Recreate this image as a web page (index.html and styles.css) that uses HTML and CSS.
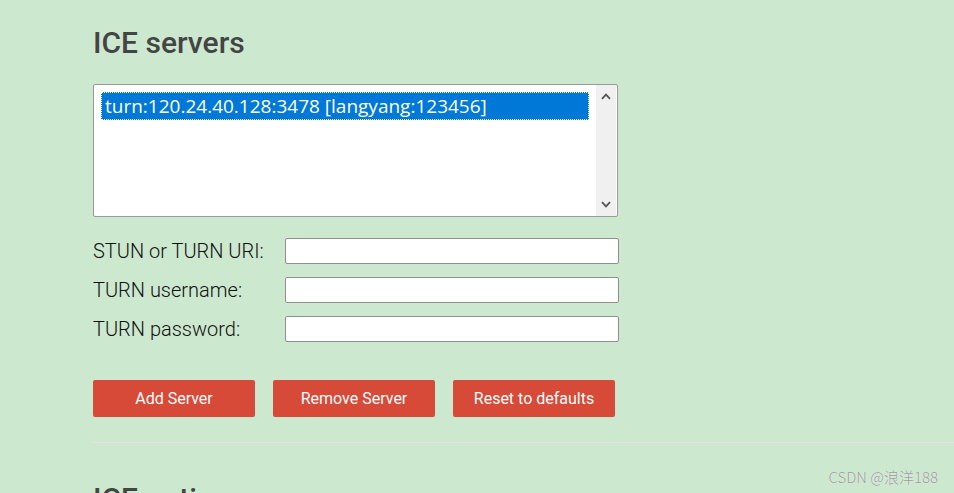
FILE: index.html
```html
<!DOCTYPE html>
<html lang="en">
<head>
    <meta charset="UTF-8">
    <meta name="viewport" content="width=device-width, initial-scale=1.0">
    <title>Trickle ICE</title>
    <link rel="stylesheet" href="styles.css">
</head>
<body>
    <div class="container">
        <section class="servers">
            <h2>ICE servers</h2>

            <div class="server-list">
                <div class="server-items">
                    <div class="server-item selected">turn:120.24.40.128:3478 [langyang:123456]</div>
                </div>
                <div class="list-scrollbar">
                    <svg width="10" height="7" viewBox="0 0 10 7"><path d="M1 5.8 L5 1.6 L9 5.8" fill="none" stroke="#555" stroke-width="1.8"/></svg>
                    <svg width="10" height="7" viewBox="0 0 10 7"><path d="M1 1.2 L5 5.4 L9 1.2" fill="none" stroke="#555" stroke-width="1.8"/></svg>
                </div>
            </div>

            <div class="server-form">
                <div class="form-row">
                    <label for="url">STUN or TURN URI:</label>
                    <input type="text" id="url">
                </div>
                <div class="form-row">
                    <label for="username">TURN username:</label>
                    <input type="text" id="username">
                </div>
                <div class="form-row">
                    <label for="password">TURN password:</label>
                    <input type="text" id="password">
                </div>
            </div>

            <div class="actions">
                <button>Add Server</button>
                <button>Remove Server</button>
                <button>Reset to defaults</button>
            </div>
        </section>

        <hr>

        <section class="options">
            <h2>ICE options</h2>
        </section>
    </div>

    <div class="watermark">CSDN @浪洋188</div>
</body>
</html>
```

FILE: styles.css
```css
* {
    box-sizing: border-box;
}

html, body {
    overflow: hidden;
}

body {
    margin: 0;
    background: #cce8cf;
    font-family: Roboto, 'Liberation Sans', sans-serif;
    font-weight: 300;
    color: #222;
}

.container {
    padding-left: 93px;
}

h2 {
    margin: 25px 0 23px;
    font-size: 30px;
    line-height: 36px;
    font-weight: 500;
    color: #444;
}

.server-list {
    display: flex;
    width: 525px;
    height: 133px;
    background: white;
    border: 1px solid #9a9a9a;
    border-radius: 2px;
}

.server-items {
    flex: 1;
    padding: 7px 7px 0 7px;
}

.server-item {
    height: 28px;
    padding: 1px 0 0 4px;
    font-family: 'Open Sans', 'Noto Sans', sans-serif;
    font-size: 19px;
    font-weight: 400;
    line-height: 27px;
    color: #111;
    white-space: nowrap;
}

.server-item.selected {
    background: #0078d7;
    color: white;
    outline: 1px dotted #fff;
    outline-offset: -1px;
}

.list-scrollbar {
    width: 20px;
    margin-right: 1px;
    background: #f0f0f0;
    display: flex;
    flex-direction: column;
    justify-content: space-between;
    align-items: center;
    padding: 8px 0 8px;
}

.server-form {
    margin-top: 21px;
}

.form-row {
    display: flex;
    align-items: center;
    margin-bottom: 13px;
}

.form-row label {
    width: 192px;
    font-size: 20px;
    font-weight: 300;
    color: #111;
}

.form-row input {
    width: 334px;
    height: 26px;
    border: 1px solid #8f8f8f;
    border-radius: 2px;
    background: white;
    padding: 2px 4px;
    font-family: Roboto, sans-serif;
}

.actions {
    display: flex;
    gap: 18px;
    margin-top: 38px;
}

button {
    width: 162px;
    height: 37px;
    background: #d84a38;
    border: none;
    border-radius: 2px;
    color: white;
    font-family: Roboto, sans-serif;
    font-size: 16px;
    font-weight: 400;
    cursor: pointer;
}

hr {
    margin: 25px 0 38px;
    border: none;
    border-top: 1px solid #e4e4e4;
}

.options h2 {
    margin-top: 38px;
}

.watermark {
    position: absolute;
    top: 466px;
    right: 16px;
    font-family: 'Noto Sans CJK SC', sans-serif;
    font-size: 15px;
    color: #9a9a9a;
    text-shadow: 0 0 1px #fff;
}
```
